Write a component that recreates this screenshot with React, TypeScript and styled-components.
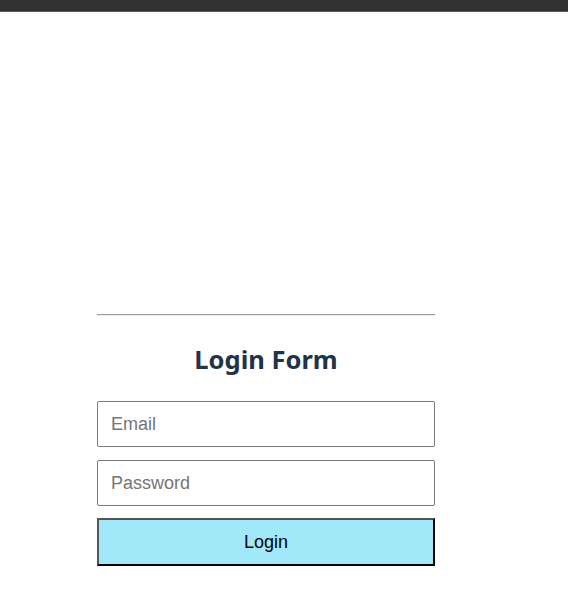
import React from "react";
import styled, { createGlobalStyle } from "styled-components";

const GlobalStyle = createGlobalStyle`
  html, body {
    margin: 0;
    padding: 0;
    background: #ffffff;
  }
`;

const TopBar = styled.div`
  height: 11px;
  background-color: #323230;
  border-bottom: 1px solid #5a5a58;
`;

const Page = styled.div`
  padding-top: 302px;
  padding-left: 97px;
`;

const FormWrap = styled.form`
  width: 338px;
  display: flex;
  flex-direction: column;
`;

const Divider = styled.hr`
  margin: 0;
  height: 0;
  border: none;
  border-top: 1px solid #9a9a9a;
  border-bottom: 1px solid #ececec;
`;

const Title = styled.h2`
  margin: 26px 0 25px;
  text-align: center;
  font-family: "Noto Sans", "Open Sans", sans-serif;
  font-weight: 700;
  font-size: 25.5px;
  line-height: 34px;
  color: #1f3349;
`;

const Field = styled.input`
  box-sizing: border-box;
  width: 100%;
  height: 46px;
  margin: 0 0 13px;
  padding: 0 13px;
  border: 1px solid #7a7a7a;
  border-radius: 2px;
  font-family: "Liberation Sans", Arial, sans-serif;
  font-size: 18px;
  color: #222;
  background: #fff;
  outline: none;

  &::placeholder {
    color: #757575;
  }
`;

const SubmitButton = styled.button`
  box-sizing: border-box;
  width: 100%;
  height: 48px;
  margin-top: -1px;
  border: 2px solid;
  border-color: #555555 #000000 #000000 #555555;
  background-color: #a1e9f8;
  font-family: "Liberation Sans", Arial, sans-serif;
  font-size: 18px;
  color: #000;
  cursor: pointer;
`;

const App: React.FC = () => {
  return (
    <>
      <GlobalStyle />
      <TopBar />
      <Page>
        <FormWrap onSubmit={(e) => e.preventDefault()}>
          <Divider />
          <Title>Login Form</Title>
          <Field type="email" placeholder="Email" />
          <Field type="password" placeholder="Password" />
          <SubmitButton type="submit">Login</SubmitButton>
        </FormWrap>
      </Page>
    </>
  );
};

export default App;
